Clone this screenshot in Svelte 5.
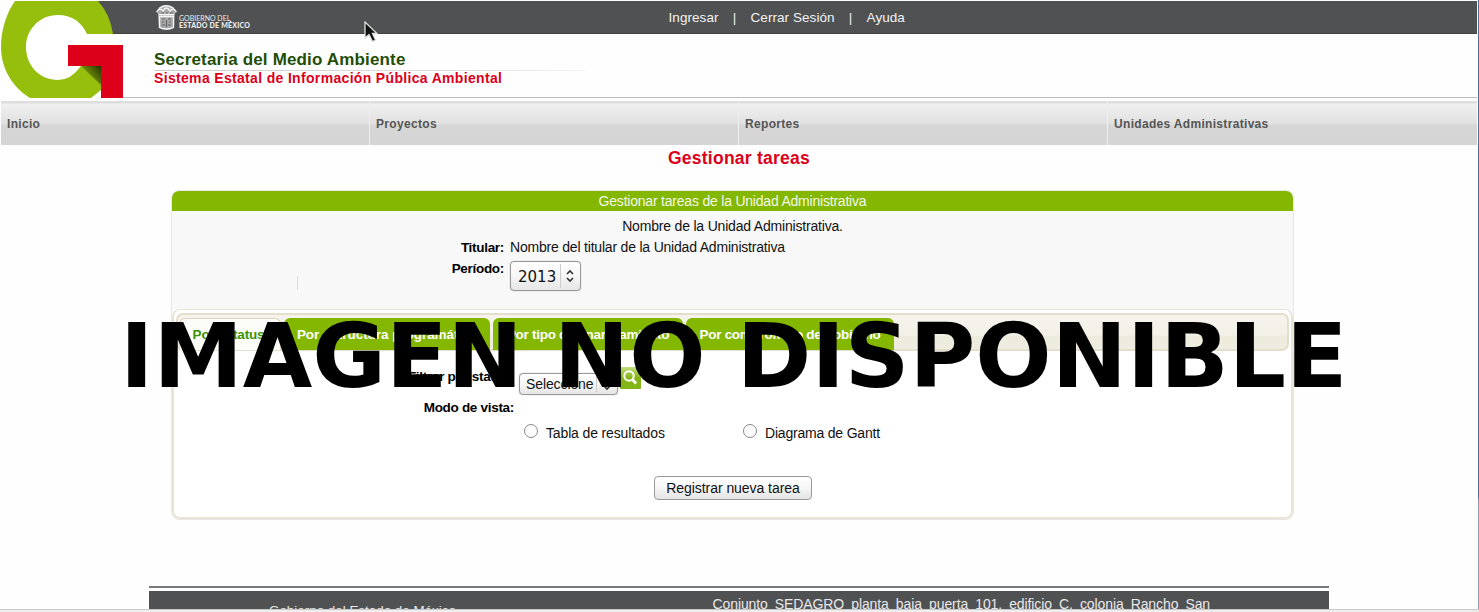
<script>
  const menu = ['Inicio', 'Proyectos', 'Reportes', 'Unidades Administrativas'];
  const tabs = [
    { label: 'Por estatus', w: 102, ls: -0.15 },
    { label: 'Por estructura programática', w: 206, ls: -0.05 },
    { label: 'Por tipo de financiamiento', w: 190, ls: -0.28 },
    { label: 'Por compromiso de gobierno', w: 208, ls: -0.28 }
  ];
</script>

<div class="page">
  <header>
    <svg class="logo" width="123" height="98" viewBox="0 0 123 98">
      <defs>
        <linearGradient id="fold" x1="102" y1="68" x2="84" y2="83" gradientUnits="userSpaceOnUse">
          <stop offset="0" stop-color="#263403" />
          <stop offset="1" stop-color="#96bf0d" />
        </linearGradient>
      </defs>
      <path d="M0 0H123V98H0Z" fill="#fff" />
      <path d="M95 1H123V34H110Z" fill="#505153" />
      <path d="M108 33H123V34H108Z" fill="#3f4042" />
      <path d="M15 1H98Q110 14 113 34H87Q78 15 58 15C39 15 26 30 26 47C26 66 40 80 58 80Q71 80 81 66H101V90L91 98H30C12 87 1 68 1 47C1 29 7 12 15 1Z" fill="#96bf0d" />
      <path d="M81 66H102V86Z" fill="url(#fold)" />
      <path d="M68 45H123V98H101V66H68Z" fill="#dc001b" />
    </svg>
    <div class="head-main">
      <div class="topbar">
        <div class="gov">
          <svg width="23" height="26" viewBox="0 0 23 26">
            <path d="M3 5Q6 1 11 1T20 5L22.500 8Q18.500 9 19.500 12L19 24Q16 26 11.500 26T4 24L3 12Q4 9 .5 8Z" fill="#a9a9a9" />
            <path d="M2 7.500Q5 3 8 7Q11.500 1 15 7Q18 3 21 7.500M4 4.500Q11 -1 19 4.500M3.500 10.500H19.500M4.500 12.500H18.500V23.500Q11.500 26.500 4.500 23.500Z" fill="none" stroke="#f5f5f5" stroke-width="1.3" />
            <path d="M6 9H9M11 9H13M15 9H18M7 15H10M13 15H16M7 18H9M11.500 16V23M14 18H16M7 21H10M13 21H16" fill="none" stroke="#626365" stroke-width="1.200" />
          </svg>
          <div class="gov-name"><span>GOBIERNO DEL</span><b>ESTADO DE MÉXICO</b></div>
        </div>
        <nav class="session"><span>Ingresar</span><i>|</i><span>Cerrar Sesión</span><i>|</i><span>Ayuda</span></nav>
      </div>
      <div class="brand">
        <div class="org"><span>Secretaria del Medio Ambiente</span></div>
        <div class="system"><span>Sistema Estatal de Información Pública Ambiental</span></div>
      </div>
    </div>
  </header>

  <nav class="menu">
    {#each menu as item}<div><span>{item}</span></div>{/each}
  </nav>

  <h1><span>Gestionar tareas</span></h1>

  <section class="panel">
    <h2><span>Gestionar tareas de la Unidad Administrativa</span></h2>
    <div class="info">
      <div class="unit"><span>Nombre de la Unidad Administrativa.</span></div>
      <div class="row"><b>Titular:</b><span class="holder">Nombre del titular de la Unidad Administrativa</span></div>
      <div class="row period">
        <div class="mark"></div>
        <b>Período:</b>
        <div class="select big"><span>2013</span><i></i>
          <svg width="10" height="14" viewBox="0 0 10 14"><path d="M2 5L5 2L8 5M2 9L5 12L8 9" /></svg>
        </div>
      </div>
    </div>
    <div class="tabbox">
      <div class="tabs">
        {#each tabs as tab, i}
          <div class="tab" class:active={i === 0} style="width:{tab.w}px;letter-spacing:{tab.ls}px"><span>{tab.label}</span></div>
        {/each}
      </div>
      <div class="filter">
        <b>Filtrar por status:</b>
        <div class="select small"><span>Seleccione</span><i></i>
          <svg width="10" height="14" viewBox="0 0 10 14"><path d="M2 5L5 2L8 5M2 9L5 12L8 9" /></svg>
        </div>
        <svg class="search" width="21" height="22" viewBox="0 0 21 22">
          <defs><linearGradient id="lens" x2="0" y2="1"><stop stop-color="#c3dc80" /><stop offset=".5" stop-color="#86b414" /><stop offset="1" stop-color="#83b51a" /></linearGradient></defs>
          <rect width="21" height="22" rx="1" fill="url(#lens)" />
          <circle cx="9" cy="9" r="4.7" fill="none" stroke="#fff" stroke-width="2" />
          <path d="M12.5 12.5L16 16.5" stroke="#fff" stroke-width="2.8" />
        </svg>
      </div>
      <div class="mode"><b>Modo de vista:</b></div>
      <div class="options">
        <div class="option"><i></i><span class="o1">Tabla de resultados</span></div>
        <div class="option"><i></i><span class="o2">Diagrama de Gantt</span></div>
      </div>
      <button><span>Registrar nueva tarea</span></button>
    </div>
  </section>

  <footer>
    <div class="foot-body">
      <span class="gob">Gobierno del Estado de México</span>
      <span class="addr">Conjunto SEDAGRO planta baja puerta 101, edificio C, colonia Rancho San</span>
    </div>
  </footer>
  <div class="statusbar"></div>

  <div class="notice">IMAGEN NO DISPONIBLE</div>
  <svg class="cursor" width="15" height="22" viewBox="0 0 15 22">
    <path d="M1 1V17L5 13.5L8.5 20.5L11.5 19L8.5 12.5H13Z" fill="#111" stroke="#ddd" stroke-width="1.3" />
  </svg>
  <div class="edge"></div>
</div>

<style>
  :global(body) { background: #fff; overflow: hidden; }
  .page { position: relative; box-sizing: border-box; width: 1479px; height: 612px; overflow: hidden; display: flex; flex-direction: column; background: #fefefe; font: 14px/16px "Liberation Sans", Arial, sans-serif; color: #111; }
  span, b { white-space: nowrap; }
  header { display: flex; height: 97px; width: 1477px; border-bottom: 1px solid #bdbdbd; flex: none; }
  .logo { flex: none; display: block; }
  .head-main { flex: 1; padding-top: 1px; }
  .topbar { height: 32px; background: #505153; border-bottom: 1px solid #3f4042; display: flex; }
  .gov { width: 545.5px; padding: 3px 0 0 32px; box-sizing: border-box; display: flex; gap: 1px; }
  .gov-name { display: flex; flex-direction: column; font: 7px/7px Lato, sans-serif; color: #eee; padding-top: 11px; }
  .gov-name b { font-weight: 900; font-size: 7px; letter-spacing: .2px; }
  .session { display: flex; color: #f2f2f2; font-size: 13.5px; line-height: 33px; letter-spacing: .06px; }
  .session i { font-style: normal; width: 32px; text-align: center; }
  .brand { padding: 16px 0 0 31px; display: flex; flex-direction: column; }
  .org { font: bold 17px/20px "Liberation Sans", sans-serif; color: #234d06; letter-spacing: .16px; width: 431px; border-bottom: 1px solid; border-image: linear-gradient(90deg, #ccc, #ddd 70%, #f4f4f4) 1; }
  .system { font: bold 14px/15px "Liberation Sans", sans-serif; color: #dc001b; letter-spacing: .33px; }
  .menu { flex: none; margin: 3px 0 0 1px; height: 44px; width: 1476px; display: grid; grid-template-columns: 368px 369px 369px 1fr; background: linear-gradient(#ddd 0 2px, #f0f0f0 3px, #e0e0e0 23px, #d6d6d6 24px, #d5d5d5); }
  .menu div { padding: 15px 0 0 6px; box-sizing: border-box; font: bold 12px/17px "Liberation Sans", sans-serif; letter-spacing: .32px; color: #555; }
  .menu div + div { border-left: 1px solid #eee; padding-left: 6px; }
  h1 { margin: 2px 0 0; font: bold 17.5px/22px "Liberation Sans", sans-serif; letter-spacing: .25px; color: #dc001b; text-align: center; height: 22px; width: 1478px; flex: none; }
  .panel { flex: none; margin: 21px 0 0 171px; width: 1123px; height: 330px; box-sizing: border-box; border: 1px solid #e8e8e8; border-radius: 8px; overflow: hidden; background: #f8f8f8; display: flex; flex-direction: column; }
  h2 { margin: 0; height: 20px; font: 14px/20px "Liberation Sans", sans-serif; background: #83b700; color: #f4f8e8; text-align: center; letter-spacing: -.21px; }
  .info { height: 98px; padding-top: 7px; box-sizing: border-box; }
  .unit { text-align: center; line-height: 17px; letter-spacing: -.19px; height: 21px; }
  .row { display: flex; gap: 6px; height: 21px; line-height: 17px; }
  .row b { width: 332px; text-align: right; color: #000; font-size: 13.5px; letter-spacing: -.3px; }
  .holder { letter-spacing: -.2px; }
  .row.period b { width: 206px; margin-left: -6px; line-height: 18px; }
  .mark { width: 1px; height: 14px; margin: 16px 0 0 125px; background: #ddd; }
  .select { box-sizing: border-box; border: 1px solid #999; border-radius: 4px; background: linear-gradient(#fff, #f6f6f6 50%, #e6e6e6); display: flex; align-items: center; box-shadow: 0 0 1px #888; }
  .select i { width: 1px; align-self: stretch; margin: 2px 0; background: #ccc; }
  .select path { fill: none; stroke: #333; stroke-width: 1.6; }
  .big { width: 71px; height: 30px; margin: 1px 0 0 0; padding-left: 7px; font: 15px "DejaVu Sans", sans-serif; }
  .big span { width: 42px; padding-top: 1px; }
  .big svg { margin-left: 4px; }
  .tabbox { height: 210px; box-sizing: border-box; border: 2px solid #e9e4d6; border-top-width: 1px; border-radius: 8px; background: #fff; padding: 3px 2px; display: flex; flex-direction: column; }
  .tabs { height: 38px; flex: none; box-sizing: border-box; border: 2px solid #e4decd; border-radius: 7px; background: linear-gradient(#f5f3ec, #f3f0e7 60%, #ecebdc 61%, #efece1); padding: 3px 0 0 1px; display: flex; gap: 3px; }
  .tab { height: 32px; box-sizing: border-box; background: #83b700; color: #fff; border-radius: 6px 6px 0 0; font-weight: bold; font-size: 13.5px; text-align: center; line-height: 34px; }
  .active { background: #fcfcf9; color: #3a9208; border: 1px solid #ddd5c0; border-bottom: 0; line-height: 32px; padding-right: 3px; }
  .filter { display: flex; height: 45px; padding-top: 16px; box-sizing: border-box; }
  .filter b, .mode b { width: 338px; text-align: right; line-height: 19px; color: #000; font-size: 13.5px; letter-spacing: -.3px; }
  .small { margin: 6px 0 0 5px; width: 99px; height: 22px; padding-left: 6px; flex: none; letter-spacing: -.1px; }
  .small span { width: 70px; margin-top: -1px; }
  .small svg { margin-left: 5px; }
  .search { margin-left: 2px; }
  .mode { display: flex; height: 26px; padding-top: 2px; box-sizing: border-box; }
  .options { display: flex; padding-left: 348px; height: 54px; }
  .option { width: 219px; display: flex; gap: 8px; padding-top: 3px; box-sizing: border-box; }
  .option i { width: 14px; height: 14px; border: 1.5px solid #888; border-radius: 50%; box-sizing: border-box; background: #fff; margin-top: -1px; }
  .option span { line-height: 17px; }
  .o1 { letter-spacing: -.14px; }
  .o2 { letter-spacing: -.2px; }
  button { box-sizing: border-box; margin-left: 478px; width: 158px; height: 24px; flex: none; border: 1.5px solid #999; border-radius: 4px; background: linear-gradient(#fff, #f6f6f6 50%, #e4e4e4); font: 14px "Liberation Sans", sans-serif; letter-spacing: -.05px; color: #111; padding: 0; }
  footer { flex: none; margin: 66px 0 0 149px; width: 1180px; height: 23px; border-top: 2px solid #77787a; box-sizing: border-box; padding-top: 3px; overflow: hidden; }
  .foot-body { height: 60px; background: #505153; color: #e8e8e8; line-height: 16px; display: flex; padding-left: 120px; }
  .gob { width: 443.5px; padding-top: 12px; font-size: 13.4px; }
  .addr { padding-top: 5px; letter-spacing: -.1px; word-spacing: 3.3px; }
  .statusbar { height: 3px; background: #eee; border-top: 1px solid #c8c8c8; box-sizing: border-box; flex: none; }
  .notice { position: absolute; left: 120px; top: 306px; font: bold 89.85px/100px "DejaVu Sans", sans-serif; color: #000; white-space: nowrap; }
  .cursor { position: absolute; left: 364px; top: 21px; }
  .edge { position: absolute; right: 0; top: 0; width: 1px; height: 609px; background: linear-gradient(#4a70a8 0 498px, #8899b0 500px); }
</style>
